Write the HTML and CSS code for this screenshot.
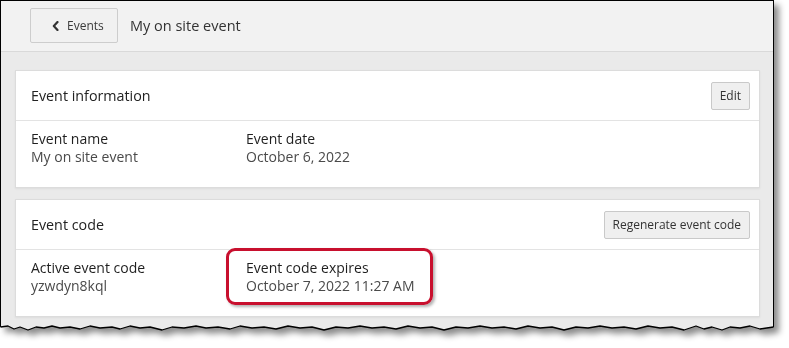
FILE: index.html
```html
<!DOCTYPE html>
<html lang="en">
<head>
<meta charset="utf-8">
<title>My on site event</title>
<link rel="stylesheet" href="styles.css">
</head>
<body>
<div class="shot">
  <div class="frame">
    <header class="topbar">
      <button class="back" type="button">
        <svg class="chev" width="7" height="10" viewBox="0 0 7 10" aria-hidden="true"><path d="M5.5 1 L1.8 5 L5.5 9" fill="none" stroke="#333" stroke-width="2.2" stroke-linecap="round" stroke-linejoin="round"/></svg>
        <span>Events</span>
      </button>
      <h1 class="title">My on site event</h1>
    </header>
    <main class="content">
      <section class="card">
        <div class="card-head">
          <h2>Event information</h2>
          <button class="btn" type="button">Edit</button>
        </div>
        <div class="card-body">
          <div class="field">
            <div class="label">Event name</div>
            <div class="value">My on site event</div>
          </div>
          <div class="field">
            <div class="label">Event date</div>
            <div class="value">October 6, 2022</div>
          </div>
        </div>
      </section>
      <section class="card">
        <div class="card-head">
          <h2>Event code</h2>
          <button class="btn" type="button">Regenerate event code</button>
        </div>
        <div class="card-body">
          <div class="field">
            <div class="label">Active event code</div>
            <div class="value">yzwdyn8kql</div>
          </div>
          <div class="field">
            <div class="label">Event code expires</div>
            <div class="value">October 7, 2022 11:27 AM</div>
            <div class="highlight"></div>
          </div>
        </div>
      </section>
    </main>
  </div>
  <svg class="edge" width="776" height="348" viewBox="0 0 776 348" aria-hidden="true">
    <polyline fill="none" stroke="#000" stroke-width="1.3" stroke-linejoin="round"
      points="0.5,327 8,326 14,329 20,327 28,330 36,327 44,328 52,326 60,328 70,327 80,329 90,326 100,328 112,327 120,329 130,326 140,328 150,327 162,330 172,327 184,328 196,326 206,328 218,327 230,329 240,326 252,328 264,327 276,329 288,326 300,328 312,327 324,330 336,327 348,328 360,326 372,328 384,327 396,329 408,326 420,328 432,327 444,330 456,327 468,328 480,326 492,328 504,327 516,329 528,326 540,328 552,327 564,330 576,327 588,328 600,326 612,328 624,327 636,329 648,326 660,328 672,327 684,330 696,326 704,329 712,327 722,330 730,327 740,328 750,326 760,329 773.5,327"/>
  </svg>
</div>
</body>
</html>
```

FILE: styles.css
```css
* { box-sizing: border-box; }

html, body {
  margin: 0;
  padding: 0;
  background: #ffffff;
}

body {
  font-family: "Open Sans", "Liberation Sans", sans-serif;
  color: #333;
}

.shot {
  position: relative;
  width: 789px;
  height: 348px;
  filter: drop-shadow(5px 5px 3px rgba(0, 0, 0, 0.45));
}

.frame {
  width: 774px;
  height: 345px;
  border: 1px solid #000;
  border-bottom: none;
  background: #eaeaea;
  display: flex;
  flex-direction: column;
  clip-path: polygon(0 0, 774px 0, 774px 327px, 760px 329px, 750px 326px, 740px 328px, 730px 327px, 722px 330px, 712px 327px, 704px 329px, 696px 326px, 684px 330px, 672px 327px, 660px 328px, 648px 326px, 636px 329px, 624px 327px, 612px 328px, 600px 326px, 588px 328px, 576px 327px, 564px 330px, 552px 327px, 540px 328px, 528px 326px, 516px 329px, 504px 327px, 492px 328px, 480px 326px, 468px 328px, 456px 327px, 444px 330px, 432px 327px, 420px 328px, 408px 326px, 396px 329px, 384px 327px, 372px 328px, 360px 326px, 348px 328px, 336px 327px, 324px 330px, 312px 327px, 300px 328px, 288px 326px, 276px 329px, 264px 327px, 252px 328px, 240px 326px, 230px 329px, 218px 327px, 206px 328px, 196px 326px, 184px 328px, 172px 327px, 162px 330px, 150px 327px, 140px 328px, 130px 326px, 120px 329px, 112px 327px, 100px 328px, 90px 326px, 80px 329px, 70px 327px, 60px 328px, 52px 326px, 44px 328px, 36px 327px, 28px 330px, 20px 327px, 14px 329px, 8px 326px, 0 327px);
}

.edge {
  position: absolute;
  left: 0;
  top: 0;
  pointer-events: none;
}

/* top bar */
.topbar {
  height: 51px;
  flex: none;
  background: #f2f2f2;
  border-bottom: 1px solid #d9d9d9;
  display: flex;
  align-items: center;
  gap: 12px;
  padding: 0 0 1px 29px;
}

.back {
  width: 88px;
  height: 35px;
  display: flex;
  align-items: center;
  gap: 8px;
  padding: 0 0 0 21px;
  background: #f1f1f1;
  border: 1px solid #cdcdcd;
  border-radius: 2px;
  font-family: inherit;
  font-size: 12px;
  color: #3a3a3a;
}

.chev { display: block; flex: none; }

.title {
  margin: 0;
  font-size: 14.5px;
  font-weight: normal;
  color: #333;
}

/* content */
.content {
  flex: 1;
  padding: 18px 13px 0 14px;
  display: flex;
  flex-direction: column;
  gap: 11px;
}

.card {
  background: #fff;
  border: 1px solid #dcdcdc;
  box-shadow: 0 1px 2px rgba(0, 0, 0, 0.06);
}

.card-head {
  height: 50px;
  border-bottom: 1px solid #e3e3e3;
  display: flex;
  align-items: center;
  justify-content: space-between;
  padding: 0 9px 0 15px;
}

.card-head h2 {
  margin: 0;
  font-size: 14.3px;
  font-weight: normal;
  color: #222;
}

.btn {
  height: 28px;
  padding: 0 8px;
  background: #efefef;
  border: 1px solid #c9c9c9;
  border-radius: 2px;
  font-family: inherit;
  font-size: 12px;
  color: #333;
}

.card-body {
  display: grid;
  grid-template-columns: 215px auto;
  padding: 9px 15px 21px;
  height: 66px;
}

.field {
  position: relative;
  font-size: 14px;
  line-height: 18px;
}

.label { color: #1f1f1f; }
.value { color: #4a4a4a; }

.highlight {
  position: absolute;
  left: -20px;
  top: -11px;
  width: 207px;
  height: 57px;
  border: 3px solid #c8102e;
  border-radius: 9px;
  box-shadow: 2px 2px 3px rgba(0, 0, 0, 0.3);
  pointer-events: none;
}
```
